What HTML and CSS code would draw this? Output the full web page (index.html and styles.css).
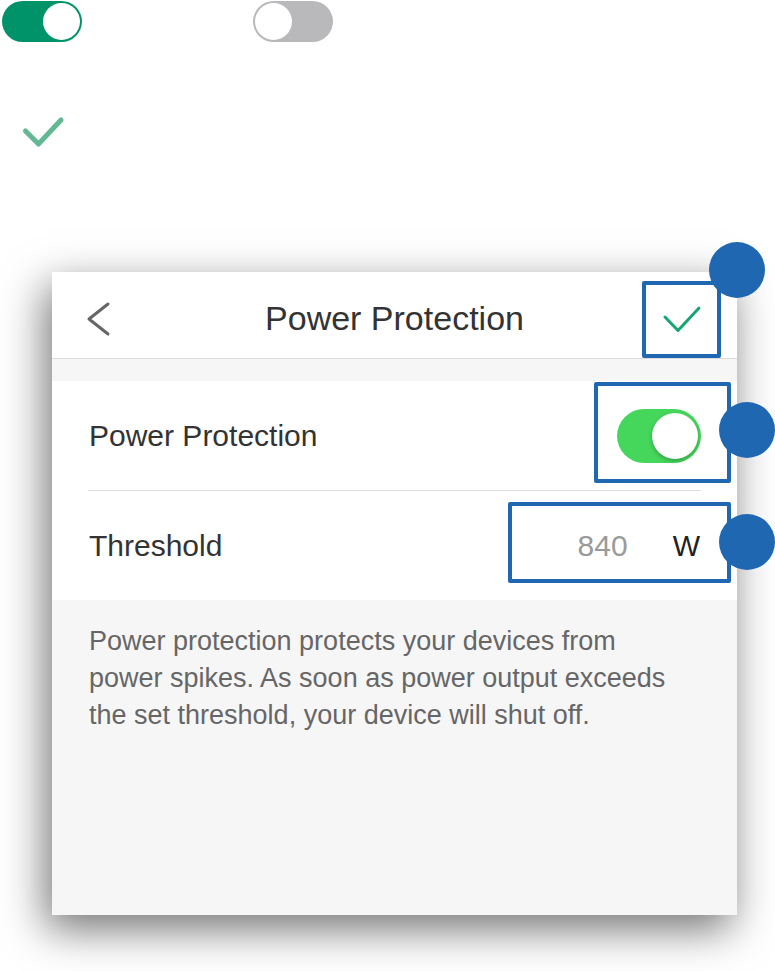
FILE: index.html
```html
<!DOCTYPE html>
<html>
<head>
<meta charset="utf-8">
<link rel="stylesheet" href="styles.css">
</head>
<body>
<div class="demo">
  <div class="switch switch-on"><span class="knob"></span></div>
  <div class="switch switch-off"><span class="knob"></span></div>
</div>
<svg class="demo-check" width="46" height="37" viewBox="0 0 46 37"><path d="M5.5 18 L18.5 31 L41 7" fill="none" stroke="#62b892" stroke-width="5" stroke-linecap="round" stroke-linejoin="round"/></svg>

<div class="card">
  <div class="header">
    <div class="hleft"><svg width="26" height="36" viewBox="0 0 26 36"><path d="M23 3 L4 18 L23 33" fill="none" stroke="#666" stroke-width="3" stroke-linecap="round" stroke-linejoin="round"/></svg></div>
    <div class="title">Power Protection</div>
    <div class="hright"><svg width="40" height="32" viewBox="0 0 40 32"><path d="M3 14 L16 27.5 L37 5" fill="none" stroke="#17a673" stroke-width="3" stroke-linecap="round" stroke-linejoin="round"/></svg></div>
  </div>
  <div class="section">
    <div class="row">
      <span class="label">Power Protection</span>
      <div class="toggle"><span class="tknob"></span></div>
    </div>
    <div class="divider"></div>
    <div class="row">
      <span class="label">Threshold</span>
      <div class="value"><span class="num">840</span><span class="unit">W</span></div>
    </div>
  </div>
  <p class="desc">Power protection protects your devices from power spikes. As soon as power output exceeds the set threshold, your device will shut off.</p>

  <div class="mark box1"></div>
  <div class="dot dot1"></div>
  <div class="mark box2"></div>
  <div class="dot dot2"></div>
  <div class="mark box3"></div>
  <div class="dot dot3"></div>
</div>
</body>
</html>
```
FILE: styles.css
```css
html, body {
  margin: 0;
  background: #fff;
  font-family: "Liberation Sans", Arial, sans-serif;
}
body {
  padding-bottom: 56px;
}
.demo {
  display: flex;
  gap: 171px;
  padding: 1px 0 0 2px;
}
.switch {
  width: 80px;
  height: 41px;
  border-radius: 21px;
  box-sizing: border-box;
  padding: 2px;
  display: flex;
}
.switch-on {
  background: #00936a;
  justify-content: flex-end;
}
.switch-off {
  background: #b9b9bb;
  justify-content: flex-start;
}
.knob {
  width: 37px;
  height: 37px;
  border-radius: 50%;
  background: #fff;
}
.demo-check {
  display: block;
  margin: 71px 0 0 20px;
}
.card {
  position: relative;
  margin: 122px 0 0 52px;
  width: 685px;
  height: 643px;
  background: #f6f6f6;
  box-shadow: -6px 14px 40px rgba(0, 0, 0, 0.55);
}
.header {
  height: 87px;
  box-sizing: border-box;
  padding-top: 7px;
  background: #fff;
  border-bottom: 1px solid #dcdcdc;
  display: grid;
  grid-template-columns: 1fr auto 1fr;
  align-items: center;
}
.hleft {
  padding-left: 33px;
  display: flex;
}
.hright {
  padding-right: 35px;
  display: flex;
  justify-content: flex-end;
}
.title {
  font-size: 34px;
  color: #333;
}
.section {
  margin-top: 22px;
  background: #fff;
}
.row {
  height: 109px;
  display: flex;
  align-items: center;
  justify-content: space-between;
  padding: 0 36px 0 37px;
}
.label {
  font-size: 30px;
  color: #333;
}
.divider {
  height: 1px;
  margin: 0 36px;
  background: #dcdcdc;
}
.toggle {
  width: 84px;
  height: 54px;
  border-radius: 27px;
  background: #45d65c;
  display: flex;
  align-items: center;
  justify-content: flex-end;
  padding-right: 3px;
  box-sizing: border-box;
}
.tknob {
  width: 46px;
  height: 46px;
  border-radius: 50%;
  background: #fff;
  box-shadow: 0 2px 4px rgba(0, 0, 0, 0.25);
}
.value {
  display: flex;
  align-items: baseline;
  gap: 45px;
  padding-right: 1px;
}
.num {
  font-size: 30px;
  color: #9a9a9a;
}
.unit {
  font-size: 29px;
  color: #222;
}
.desc {
  margin: 0;
  padding: 23px 48px 0 37px;
  font-size: 27px;
  line-height: 37px;
  color: #666;
}
.mark {
  position: absolute;
  box-sizing: border-box;
  border: 4px solid #1f67b1;
  border-radius: 2px;
}
.box1 { left: 590px; top: 9px; width: 79px; height: 77px; }
.box2 { left: 542px; top: 110px; width: 137px; height: 101px; }
.box3 { left: 456px; top: 230px; width: 223px; height: 81px; }
.dot {
  position: absolute;
  width: 56px;
  height: 56px;
  border-radius: 50%;
  background: #1f67b1;
}
.dot1 { left: 657px; top: -30px; }
.dot2 { left: 667px; top: 130px; }
.dot3 { left: 667px; top: 242px; }
```
